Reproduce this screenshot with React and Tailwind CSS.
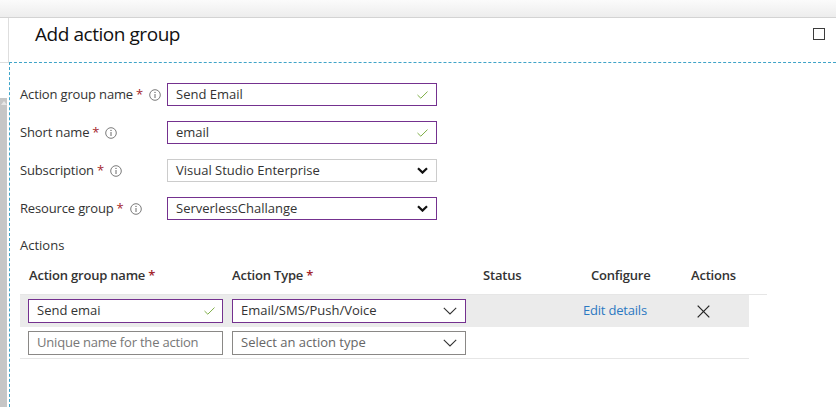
import React from "react";

const FONT = { fontFamily: '"Open Sans", "Noto Sans", sans-serif' };

function Info() {
  return (
    <svg width="12" height="12" viewBox="0 0 12 12" className="shrink-0">
      <circle cx="6" cy="6" r="5.3" fill="none" stroke="#6b6b6b" strokeWidth="0.9" />
      <line x1="6" y1="5" x2="6" y2="9" stroke="#6b6b6b" strokeWidth="1" />
      <circle cx="6" cy="3.4" r="0.7" fill="#6b6b6b" />
    </svg>
  );
}

function Check() {
  return (
    <svg width="11" height="8" viewBox="0 0 11 8" className="shrink-0">
      <polyline points="0.5,4 3.8,7.2 10.5,0.6" fill="none" stroke="#7fae47" strokeWidth="1" />
    </svg>
  );
}

function BoldChevron() {
  return (
    <svg width="11" height="7" viewBox="0 0 11 7" className="shrink-0">
      <polyline points="1,1.2 5.5,5.6 10,1.2" fill="none" stroke="#111" strokeWidth="2.2" />
    </svg>
  );
}

function ThinChevron() {
  return (
    <svg width="14" height="8" viewBox="0 0 14 8" className="shrink-0">
      <polyline points="0.8,0.8 7,7 13.2,0.8" fill="none" stroke="#333" strokeWidth="1.1" />
    </svg>
  );
}

function XIcon() {
  return (
    <svg width="13" height="13" viewBox="0 0 13 13">
      <line x1="0.7" y1="0.7" x2="12.3" y2="12.3" stroke="#222" strokeWidth="1.2" />
      <line x1="12.3" y1="0.7" x2="0.7" y2="12.3" stroke="#222" strokeWidth="1.2" />
    </svg>
  );
}

function Label({ text, info = true }) {
  return (
    <div className="w-[147px] flex items-center text-[13px] text-[#333] tracking-[-0.15px]">
      <span>{text}</span>
      <span className="text-[#a4262c] ml-[3px]">*</span>
      {info && <span className="ml-[6px] flex items-center"><Info /></span>}
    </div>
  );
}

function FormRow({ label, children, first }) {
  return (
    <div className={`flex items-center h-[23px] ${first ? "" : "mt-[15px]"}`}>
      <Label text={label} />
      {children}
    </div>
  );
}

export default function App() {
  return (
    <div style={FONT} className="w-[836px] h-[407px] overflow-hidden bg-white flex flex-col">
      {/* top bar */}
      <div className="h-[18px] shrink-0 bg-gradient-to-b from-[#fbfbfb] to-[#ededed] border-b border-[#d3d3d3]" />
      <div className="flex flex-1 min-h-0">
        {/* left strip */}
        <div className="w-[9px] shrink-0 flex flex-col">
          <div className="h-[45px] border-r border-b border-[#dedede]" />
          <div className="h-[35px]" />
          <div className="flex-1 w-[7px] bg-[#c6c6c6] flex justify-center pt-[3px]">
            <div className="w-0 h-0 border-l-[3px] border-r-[3px] border-b-[4px] border-l-transparent border-r-transparent border-b-[#e6e6e6]" />
          </div>
        </div>
        {/* main */}
        <div className="flex-1 flex flex-col min-w-0">
          <div className="h-[44px] shrink-0 flex items-center justify-between pl-[26px] pr-[11px] pb-[12px]">
            <div className="text-[19px] text-[#111] tracking-[-0.45px] leading-none">Add action group</div>
            <div className="w-[12px] h-[12px] border-[1.5px] border-[#3c3c3c]" />
          </div>
          <div className="flex-1 border-t border-l border-dashed border-[#3fa4c8] pl-[10px] pt-[20px] text-[#333]">
            <FormRow label="Action group name" first>
              <div className="w-[270px] h-[23px] border border-[#74318f] flex items-center justify-between pl-[8px] pr-[8px] text-[13px]">
                <span>Send Email</span>
                <Check />
              </div>
            </FormRow>
            <FormRow label="Short name">
              <div className="w-[270px] h-[23px] border border-[#74318f] flex items-center justify-between pl-[8px] pr-[8px] text-[13px]">
                <span>email</span>
                <Check />
              </div>
            </FormRow>
            <FormRow label="Subscription">
              <div className="w-[270px] h-[23px] border border-[#cccccc] flex items-center justify-between pl-[8px] pr-[8px] text-[13px]">
                <span>Visual Studio Enterprise</span>
                <BoldChevron />
              </div>
            </FormRow>
            <FormRow label="Resource group">
              <div className="w-[270px] h-[23px] border border-[#74318f] flex items-center justify-between pl-[8px] pr-[8px] text-[13px]">
                <span>ServerlessChallange</span>
                <BoldChevron />
              </div>
            </FormRow>

            <div className="mt-[16px] text-[13px] leading-[18px]">Actions</div>

            {/* table */}
            <div className="w-[747px] h-[41px] pt-[4px] grid grid-cols-[212px_251px_100px_100px_1fr] items-center border-b border-[#e6e6e6] text-[13px] font-semibold text-[#333] tracking-[-0.2px]">
              <div className="pl-[9px]">Action group name <span className="text-[#a4262c]">*</span></div>
              <div>Action Type <span className="text-[#a4262c]">*</span></div>
              <div>Status</div>
              <div className="pl-[8px]">Configure</div>
              <div className="pl-[8px]">Actions</div>
            </div>
            <div className="w-[729px] h-[32px] bg-[#ebebeb] grid grid-cols-[212px_251px_100px_100px_1fr] items-center text-[13px]">
              <div className="pl-[8px]">
                <div className="w-[195px] h-[24px] bg-white border border-[#74318f] flex items-center justify-between pl-[8px] pr-[7px]">
                  <span>Send emai</span>
                  <Check />
                </div>
              </div>
              <div>
                <div className="w-[234px] h-[24px] bg-white border border-[#74318f] flex items-center justify-between pl-[8px] pr-[8px]">
                  <span>Email/SMS/Push/Voice</span>
                  <ThinChevron />
                </div>
              </div>
              <div />
              <div className="text-[#2b79c2] tracking-[-0.2px]">Edit details</div>
              <div className="pl-[14px] flex items-center"><XIcon /></div>
            </div>
            <div className="w-[729px] h-[32px] border-b border-[#e6e6e6] grid grid-cols-[212px_251px_100px_100px_1fr] items-center text-[13px]">
              <div className="pl-[8px]">
                <div className="w-[195px] h-[24px] bg-white border border-[#8a8886] flex items-center pl-[8px] text-[#777] tracking-[-0.2px]">
                  <span>Unique name for the action</span>
                </div>
              </div>
              <div>
                <div className="w-[234px] h-[24px] bg-white border border-[#8a8886] flex items-center justify-between pl-[8px] pr-[8px] text-[#666]">
                  <span>Select an action type</span>
                  <ThinChevron />
                </div>
              </div>
              <div />
              <div />
              <div />
            </div>
          </div>
        </div>
      </div>
    </div>
  );
}
